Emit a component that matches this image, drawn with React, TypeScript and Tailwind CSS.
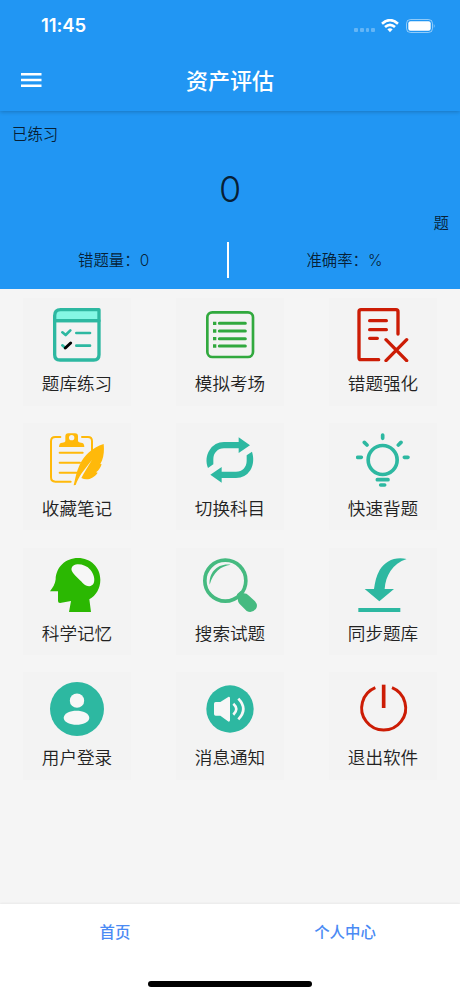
import type { ReactNode } from 'react';

const TEAL = '#2db8a1';
const GREEN = '#31a93e';
const RED = '#cc1c05';
const AMBER = '#ffb90a';

type Item = { label: string; box: string; icon: ReactNode };

const items: Item[] = [
  {
    label: '题库练习',
    box: '150 54 162 162',
    icon: (
      <g fill="none" stroke={TEAL} strokeWidth="10" strokeLinecap="round" strokeLinejoin="round">
        <path d="M164 92V77Q164 59 182 59H297V92Z" fill="#84f7e4" />
        <path d="M164 92V194Q164 210 180 210H281Q297 210 297 194V92Z" />
        <path d="M187 127L197 135L211 121M229 129H270M229 167H270" strokeWidth="8" />
        <path d="M187 166L195 173" strokeWidth="8" />
        <path d="M196 174L212 159" stroke="#000" strokeWidth="9" />
      </g>
    ),
  },
  {
    label: '模拟考场',
    box: '81 54 162 162',
    icon: (
      <g fill="none" stroke={GREEN} strokeWidth="9">
        <rect x="94" y="67" width="137" height="134" rx="15" strokeWidth="8" />
        <path d="M130 100H208M130 123H208M130 146H208M130 168H208" strokeLinecap="round" />
        <path d="M111 100H121M111 123H121M111 146H121M111 168H121" strokeWidth="10" />
      </g>
    ),
  },
  {
    label: '错题强化',
    box: '541 54 162 162',
    icon: (
      <g fill="none" stroke={RED} strokeWidth="10" strokeLinecap="round" strokeLinejoin="round">
        <path d="M609 209H556Q550 209 550 203V65Q550 59 556 59H661Q667 59 667 65V132" />
        <path d="M582 92H632M582 119H632M582 145H605M631 149L693 212M693 149L631 212" />
      </g>
    ),
  },
  {
    label: '收藏笔记',
    box: '150 428 162 162',
    icon: (
      <g fill={AMBER}>
        <path
          d="M181 440H166Q153 440 153 453V561Q153 574 166 574H212M246 440H264Q276 440 276 453V480M179 487H248M179 517H240M179 547H231"
          fill="none"
          stroke={AMBER}
          strokeWidth="6"
          strokeLinecap="round"
        />
        <path
          fillRule="evenodd"
          d="M196 438Q196 429 205 429H225Q234 429 234 438V453Q236 457 243 457Q253 457 253 470H177Q177 457 187 457Q195 457 196 453ZM215 434A8 8 0 1 0 215 450A8 8 0 1 0 215 434Z"
        />
        <path d="M311 461C276 472 253 495 239 523C229 544 226 564 221 585L227 584C231 573 238 560 245 549L276 508L250 552L244 563C262 573 282 563 293 547L288 546C297 541 301 532 305 522L301 521C312 503 313 480 311 461Z" />
      </g>
    ),
  },
  {
    label: '切换科目',
    box: '81 428 162 162',
    icon: (
      <g fill={TEAL}>
        <path d="M96 533C89 515 90 495 101 479Q116 455 144 455H188V441L222 465L188 488V474H144C125 474 112 488 112 507V522Z" />
        <path d="M228 484C234 503 233 523 223 540Q208 563 180 563H137V577L103 553L137 530V544H180C199 544 212 530 212 511V495Z" />
      </g>
    ),
  },
  {
    label: '快速背题',
    box: '541 428 162 162',
    icon: (
      <g fill="none" stroke={TEAL} strokeWidth="11" strokeLinecap="round">
        <circle cx="621" cy="509" r="43.500" />
        <path d="M621 434V444M566 456L574 464M676 456L668 464M546 501H557M686 501H697M605 568H637M615 584H627" />
      </g>
    ),
  },
  {
    label: '科学记忆',
    box: '150 51 162 162',
    icon: (
      <g>
        <path
          fill="#2bb802"
          d="M234 51C272 51 301 79 301 116C301 143 288 163 268 175L273 213H207L213 180L180 186Q174 186 174 180V151H150C158 140 166 129 167 115C168 79 196 51 234 51Z"
        />
        <path
          fill="#f7f7f7"
          d="M234 70C219 69 211 81 216 91C222 103 239 116 248 126C261 139 276 138 281 127C286 114 281 98 271 86C262 76 248 70 234 70Z"
        />
      </g>
    ),
  },
  {
    label: '搜索试题',
    box: '81 51 162 162',
    icon: (
      <g fill="#45ba80">
        <circle cx="148" cy="119" r="61.500" fill="none" stroke="#45ba80" strokeWidth="11" />
        <path d="M101 131C98 95 124 66 164 71C134 75 112 93 101 131Z" />
        <path d="M194 150L201 157Q211 156 219 164L237 181Q247 193 240 203Q228 218 212 210L191 189Q184 182 186 173L183 160Z" />
      </g>
    ),
  },
  {
    label: '同步题库',
    box: '541 51 162 162',
    icon: (
      <g fill={TEAL}>
        <path d="M693 54C657 46 628 61 612 87C602 104 598 124 595 144H567L611 181L655 144H627C630 104 650 68 693 54Z" />
        <path d="M548 201H674V213H548Z" />
      </g>
    ),
  },
  {
    label: '用户登录',
    box: '150 426 162 162',
    icon: (
      <g fill="#f7f7f7">
        <circle cx="231" cy="507" r="81" fill={TEAL} />
        <circle cx="231" cy="482" r="21.500" />
        <path d="M191 534C193 505 266 505 268 534C266 561 193 561 191 534Z" />
      </g>
    ),
  },
  {
    label: '消息通知',
    box: '81 426 162 162',
    icon: (
      <g fill="#f7f7f7">
        <circle cx="162" cy="507" r="71" fill={TEAL} />
        <path d="M119 486H133L158 470Q162 470 162 474V541Q162 545 158 545L133 527H119Q114 527 114 522V491Q114 486 119 486Z" />
        <path
          d="M172 491Q190 507 172 524M187 476Q217 507 187 538"
          fill="none"
          stroke="#f7f7f7"
          strokeWidth="8"
        />
      </g>
    ),
  },
  {
    label: '退出软件',
    box: '541 426 162 162',
    icon: (
      <g fill="none" stroke={RED} strokeWidth="9">
        <path d="M599 443A66 66 0 1 0 649 443" />
        <path d="M624 434V504" strokeWidth="11" />
      </g>
    ),
  },
];

function StatusBar() {
  return (
    <div className="flex h-[50px] items-center pl-[41px] pr-[25px] pt-px text-white">
      <span className="flex-1 font-['Inter'] text-[18.500px] font-semibold leading-none tracking-[-0.1px]">11:45</span>
      <div className="mt-[9px] flex gap-[2px]">
        {[0, 1, 2, 3].map((n) => (
          <i key={n} className="size-[3.700px] rounded-[1px] bg-white/30" />
        ))}
      </div>
      <svg className="ml-[6px] h-[14px] w-[18px]" viewBox="0 0 54 42" fill="none" stroke="#fff" strokeWidth="8">
        <path d="M3 14Q27 -7 51 14" />
        <path d="M12 24Q27 11 42 24" />
        <path d="M19 31Q27 25 35 31L27 40Z" fill="#fff" stroke="none" />
      </svg>
      <svg className="ml-[7px] h-[14px] w-[29px]" viewBox="0 0 29 14">
        <rect x="0.500" y="0.500" width="26" height="13" rx="4" fill="none" stroke="#fff" strokeOpacity="0.5" />
        <rect x="2.300" y="2.300" width="22.400" height="9.400" rx="2.200" fill="#fff" />
        <path d="M27.800 5Q29.500 7 27.800 9Z" fill="#fff" fillOpacity="0.5" />
      </svg>
    </div>
  );
}

export default function App() {
  return (
    <div className="flex h-[996px] w-[460px] flex-col overflow-hidden bg-[#f5f5f5] font-['Noto_Sans_CJK_SC',sans-serif]">
      <header className="relative h-[111px] shrink-0 bg-[#2196f3] shadow-[0_1px_4px_rgba(0,0,0,0.22)]">
        <StatusBar />
        <div className="grid h-[60px] grid-cols-[64px_1fr_64px] items-center">
          <svg className="ml-[21px] h-[14px] w-[20.500px]" viewBox="0 0 20.5 14" fill="#fff">
            <path d="M0 0H20.500V2.400H0ZM0 5.800H20.500V8.200H0ZM0 11.600H20.500V14H0Z" />
          </svg>
          <h1 className="-mt-[2px] text-center text-[22px] font-medium leading-none text-white">资产评估</h1>
        </div>
      </header>

      <section className="flex h-[178px] shrink-0 flex-col bg-[#2196f3] text-[15.400px] font-[350] leading-[22px] text-black/80">
        <p className="px-3 pt-[11px]">已练习</p>
        <p className="mt-[22px] text-center font-['Inter'] text-[36px] leading-[46px]">0</p>
        <p className="-mt-px px-[11px] text-right">题</p>
        <div className="mt-[9px] flex h-[36px] items-center pr-[2px] text-center">
          <p className="flex-1">错题量：<span className="font-['Inter']">0</span></p>
          <i className="h-[36px] w-[1.500px] bg-white" />
          <p className="flex-1 pl-[2px]">准确率：<span className="font-['Inter']">%</span></p>
        </div>
      </section>

      <main className="grid flex-1 auto-rows-[107.500px] grid-cols-[107.500px_107.500px_107.500px] content-start justify-center gap-x-[45.500px] gap-y-[17.300px] pt-[9px]">
        {items.map((item) => (
          <button key={item.label} className="flex flex-col items-center bg-[#f3f3f3] pt-[10px]">
            <svg className="size-[54px]" viewBox={item.box}>
              {item.icon}
            </svg>
            <span className="mt-[9px] text-[17.600px] font-[350] leading-[24px] text-[#222]">{item.label}</span>
          </button>
        ))}
      </main>

      <footer className="flex h-[92px] shrink-0 flex-col items-center bg-white shadow-[0_-1px_2px_rgba(0,0,0,0.05)]">
        <nav className="grid h-[55px] w-full grid-cols-2 items-center text-center text-[15.400px] font-medium text-[#4a8af4]">
          <a>首页</a>
          <a>个人中心</a>
        </nav>
        <i className="mt-[22px] h-[6px] w-[164px] rounded-full bg-black" />
      </footer>
    </div>
  );
}
